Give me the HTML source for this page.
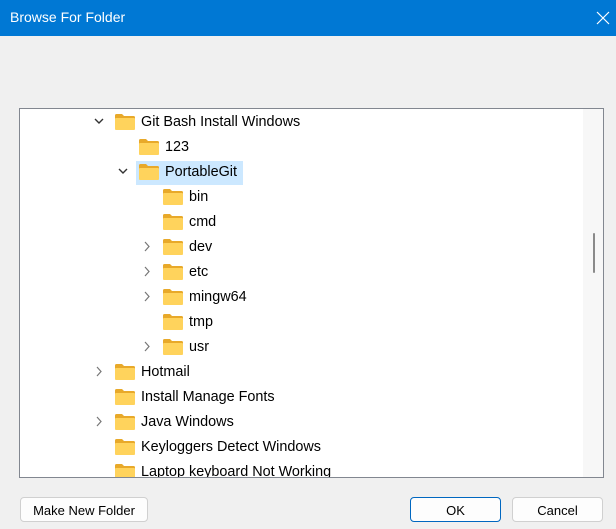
<!DOCTYPE html>
<html><head><style>
body{margin:0;width:616px;height:529px;background:#f0f0f0;font-family:"Liberation Sans",sans-serif;position:relative;overflow:hidden}
.title{position:absolute;left:0;top:0;width:616px;height:36px;background:#0078d4;color:#fff;font-size:14px}
.title span{position:absolute;left:10px;top:9px}
.box{position:absolute;left:19px;top:108px;width:583px;height:368px;border:1px solid #828790;background:#fff;overflow:hidden}
.track{position:absolute;right:0;top:0;width:20px;height:100%;background:#f7f7f7}
.thumb{position:absolute;left:573px;top:124px;width:2px;height:40px;background:#8a8a8a;border-radius:1px}
.row{position:absolute;height:24px;font-size:14.4px;color:#000;line-height:24px}
.f{position:absolute;top:4px;width:20px;height:16px}
.t{position:absolute}
.ch{position:absolute;top:0}
.sel{position:absolute;left:116px;top:52px;width:107px;height:24px;background:#cce8ff}
.btn{position:absolute;top:497px;height:25px;border:1px solid #d0d0d0;background:#fdfdfd;border-radius:4px;font-size:13px;text-align:center;line-height:25px;box-sizing:border-box}
</style></head><body>
<div class="title"><span>Browse For Folder</span>
<svg style="position:absolute;left:596px;top:11px" width="14" height="14"><path d="M1 1L13 13M13 1L1 13" stroke="#fff" stroke-width="1.2"/></svg></div>
<div class="box">
<div class="track"></div><div class="thumb"></div>
<div class="sel"></div>
<div id="rows"></div>
</div>
<div class="btn" style="left:20px;width:128px">Make New Folder</div>
<div class="btn" style="left:410px;width:91px;border:1.5px solid #0067c0">OK</div>
<div class="btn" style="left:512px;width:91px">Cancel</div>
<script>
var rows=[[0,'v','Git Bash Install Windows'],[1,'','123'],[1,'v','PortableGit'],[2,'','bin'],[2,'','cmd'],[2,'>','dev'],[2,'>','etc'],[2,'>','mingw64'],[2,'','tmp'],[2,'>','usr'],[0,'>','Hotmail'],[0,'','Install Manage Fonts'],[0,'>','Java Windows'],[0,'','Keyloggers Detect Windows'],[0,'','Laptop keyboard Not Working']];
var h='';
rows.forEach(function(r,i){
var x=73+r[0]*24, y=1+i*25;
h+='<div class="row" style="left:0;top:'+y+'px;width:560px">';
if(r[1]=='v')h+='<svg class="ch" style="left:'+x+'px" width="12" height="24"><path d="M2 9L6 13L10 9" fill="none" stroke="#333" stroke-width="1.4"/></svg>';
if(r[1]=='>')h+='<svg class="ch" style="left:'+x+'px" width="12" height="24"><path d="M4 7L8 11.5L4 16" fill="none" stroke="#777" stroke-width="1.2"/></svg>';
h+='<svg class="f" style="left:'+(x+22)+'px" viewBox="0 0 20 16"><path d="M0 1.5Q0 0 1.5 0H7L9 2H18.5Q20 2 20 3.5V5H0Z" fill="#e8a92a"/><rect x="0" y="4" width="20" height="12" rx="1" fill="#ffd35c"/></svg>';
h+='<span class="t" style="left:'+(x+48)+'px">'+r[2]+'</span></div>';
});
document.getElementById('rows').innerHTML=h;
</script>
</body></html>
